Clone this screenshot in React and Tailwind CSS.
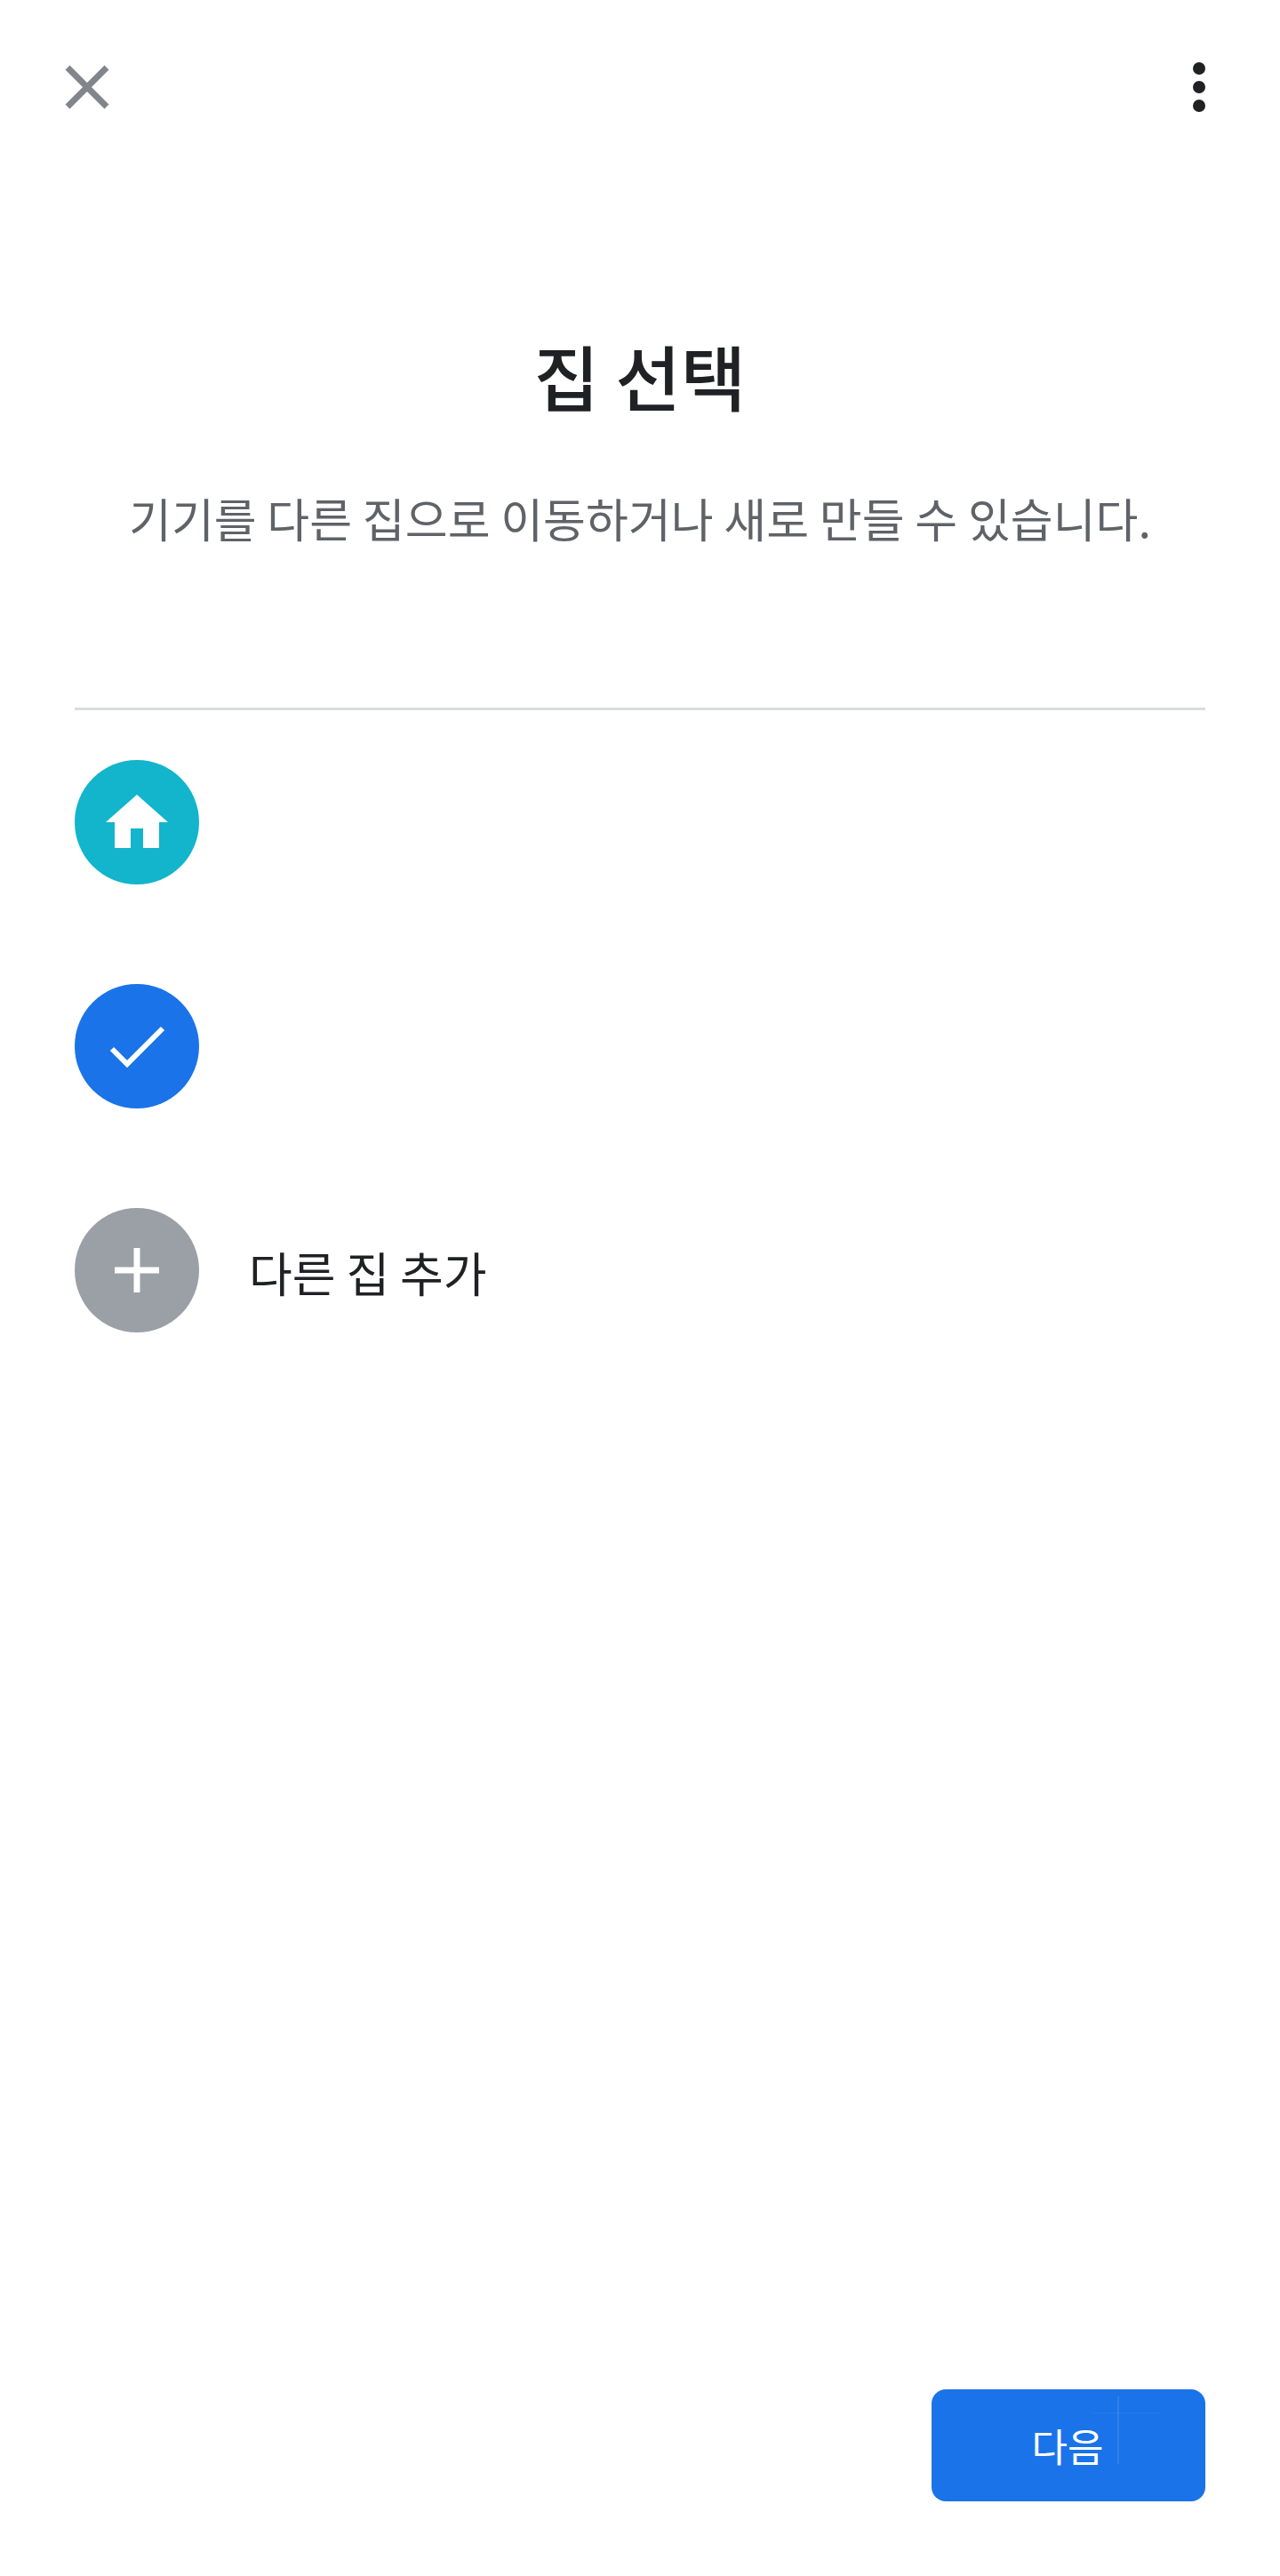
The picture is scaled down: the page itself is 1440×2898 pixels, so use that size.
import React from 'react';

const font = "font-['Noto_Sans_CJK_KR','Noto_Sans',sans-serif]";

const HomeIcon = () => (
  <svg width="140" height="140" viewBox="0 0 140 140" fill="#fff">
    <path d="M70 39 L105 70 H95 V99 H77 V77 H63 V99 H45 V70 H35 Z" />
  </svg>
);

const CheckIcon = () => (
  <svg width="140" height="140" viewBox="0 0 140 140" fill="none" stroke="#fff" strokeWidth="6">
    <path d="M42 73 L59 90 L99 50" />
  </svg>
);

const PlusIcon = () => (
  <svg width="140" height="140" viewBox="0 0 140 140" fill="none" stroke="#fff" strokeWidth="7">
    <path d="M70 45 V95 M45 70 H95" />
  </svg>
);

const HomeRow = ({ color, icon, label }) => (
  <div className="flex items-center h-[141px] gap-[56px]">
    <div className={`w-[140px] h-[140px] rounded-full shrink-0 ${color}`}>{icon}</div>
    {label && <span className="mt-[6px] text-[53px] leading-none text-[#202124]">{label}</span>}
  </div>
);

const App = () => {
  return (
    <div className={`flex flex-col h-[2898px] bg-white ${font}`}>
      <div className="flex items-center justify-between h-[196px] pl-[73px] pr-[84px]">
        <svg width="50" height="50" viewBox="0 0 50 50" fill="none" stroke="#80868b" strokeWidth="7">
          <path d="M3 3 L47 47 M47 3 L3 47" />
        </svg>
        <svg width="14" height="56" viewBox="0 0 14 56" fill="#202124">
          <circle cx="7" cy="7" r="7" />
          <circle cx="7" cy="28" r="7" />
          <circle cx="7" cy="49" r="7" />
        </svg>
      </div>

      <h1 className="mt-[175px] text-center text-[80px] leading-[100px] font-medium text-[#202124]">집 선택</h1>
      <p className="mt-[82px] text-center text-[52px] leading-[60px] text-[#5f6368] tracking-[0.05px]">
        기기를 다른 집으로 이동하거나 새로 만들 수 있습니다.
      </p>

      <div className="mx-[84px] mt-[183px] h-[3px] bg-[#dadce0]" />

      <div className="flex flex-col gap-[111px] px-[84px] mt-[55px]">
        <HomeRow color="bg-[#12b5cb]" icon={<HomeIcon />} />
        <HomeRow color="bg-[#1a73e8]" icon={<CheckIcon />} />
        <HomeRow color="bg-[#9aa0a6]" icon={<PlusIcon />} label="다른 집 추가" />
      </div>

      <div className="flex justify-end mt-auto px-[84px] pb-[84px]">
        <button className="relative w-[308px] h-[126px] rounded-2xl bg-[#1a73e8] text-white text-[44px] leading-none pr-[2px]">
          다음
          <span className="absolute left-[209px] top-[8px] w-[2px] h-[76px] bg-white/10" />
          <span className="absolute left-[180px] top-[26px] w-[78px] h-[1px] bg-white/5" />
        </button>
      </div>
    </div>
  );
};

export default App;
